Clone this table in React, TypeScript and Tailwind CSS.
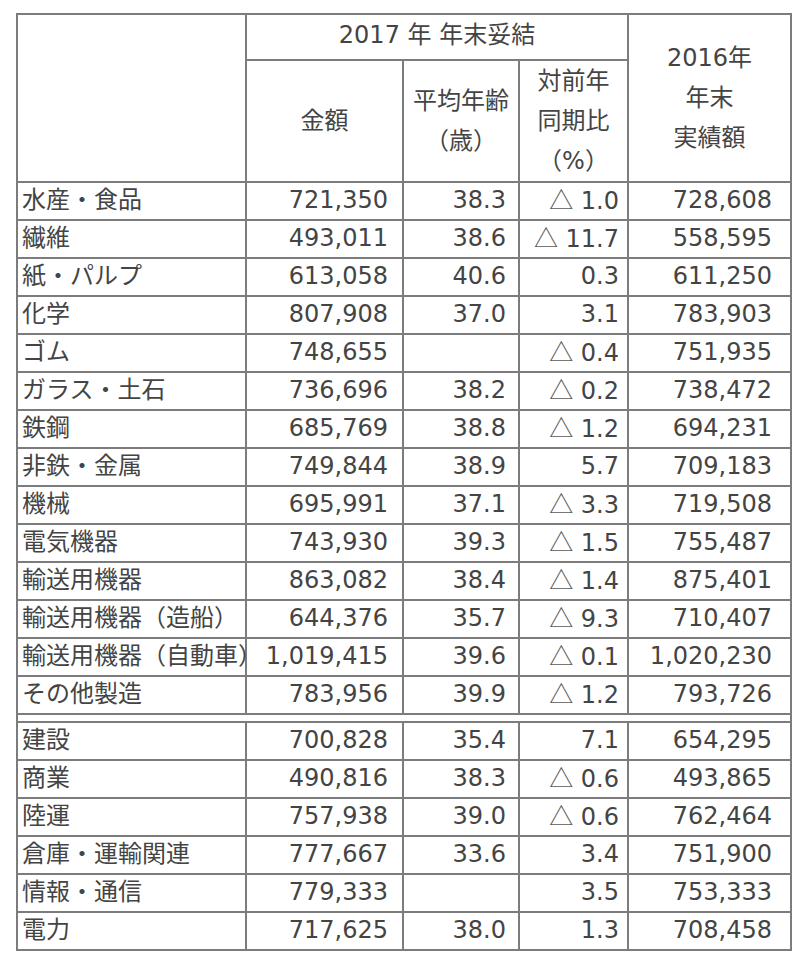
import React from "react";

type Row = [string, string, string, string, string];

const top: Row[] = [
  ["水産・食品", "721,350", "38.3", "△ 1.0", "728,608"],
  ["繊維", "493,011", "38.6", "△ 11.7", "558,595"],
  ["紙・パルプ", "613,058", "40.6", "0.3", "611,250"],
  ["化学", "807,908", "37.0", "3.1", "783,903"],
  ["ゴム", "748,655", "", "△ 0.4", "751,935"],
  ["ガラス・土石", "736,696", "38.2", "△ 0.2", "738,472"],
  ["鉄鋼", "685,769", "38.8", "△ 1.2", "694,231"],
  ["非鉄・金属", "749,844", "38.9", "5.7", "709,183"],
  ["機械", "695,991", "37.1", "△ 3.3", "719,508"],
  ["電気機器", "743,930", "39.3", "△ 1.5", "755,487"],
  ["輸送用機器", "863,082", "38.4", "△ 1.4", "875,401"],
  ["輸送用機器（造船）", "644,376", "35.7", "△ 9.3", "710,407"],
  ["輸送用機器（自動車）", "1,019,415", "39.6", "△ 0.1", "1,020,230"],
  ["その他製造", "783,956", "39.9", "△ 1.2", "793,726"],
];

const bottom: Row[] = [
  ["建設", "700,828", "35.4", "7.1", "654,295"],
  ["商業", "490,816", "38.3", "△ 0.6", "493,865"],
  ["陸運", "757,938", "39.0", "△ 0.6", "762,464"],
  ["倉庫・運輸関連", "777,667", "33.6", "3.4", "751,900"],
  ["情報・通信", "779,333", "", "3.5", "753,333"],
  ["電力", "717,625", "38.0", "1.3", "708,458"],
];

const cell = "border-2 border-[#7c7c7c] p-0 align-middle";
const dcell = `${cell} leading-[30px] pb-[3px] whitespace-nowrap`;

function Change({ v }: { v: string }) {
  if (v.startsWith("△")) {
    return (
      <>
        <span className="font-['Noto_Sans_CJK_JP'] text-[#5a5a5a]">△</span>
        {v.slice(1)}
      </>
    );
  }
  return <>{v}</>;
}

function DataRow({ r }: { r: Row }) {
  return (
    <tr className="h-[38px]">
      <td className={`${dcell} pl-[4px] text-left`}>{r[0]}</td>
      <td className={`${dcell} pr-[14px] text-right`}>{r[1]}</td>
      <td className={`${dcell} pr-[12px] text-right`}>{r[2]}</td>
      <td className={`${dcell} pr-[8px] text-right`}>
        <Change v={r[3]} />
      </td>
      <td className={`${dcell} pr-[18px] text-right`}>{r[4]}</td>
    </tr>
  );
}

export default function App() {
  return (
    <div className="w-[800px] h-[960px] bg-white pl-[16px] pt-[13px] text-[#444444] font-['DejaVu_Sans','Noto_Sans_CJK_JP',sans-serif] text-[24px] leading-[40px]">
      <table className="table-fixed border-collapse w-[774px]">
        <colgroup>
          <col className="w-[229px]" />
          <col className="w-[157px]" />
          <col className="w-[116px]" />
          <col className="w-[109px]" />
          <col className="w-[163px]" />
        </colgroup>
        <thead>
          <tr className="h-[46px]">
            <th rowSpan={2} className={cell}></th>
            <th colSpan={3} className={`${cell} font-normal text-center pb-[4px]`}>
              2017 年 年末妥結
            </th>
            <th rowSpan={2} className={`${cell} font-normal text-center`}>
              <div className="flex flex-col items-center">
                <span>2016年</span>
                <span>年末</span>
                <span>実績額</span>
              </div>
            </th>
          </tr>
          <tr className="h-[120px]">
            <th className={`${cell} font-normal text-center`}>金額</th>
            <th className={`${cell} font-normal text-center`}>
              <div className="flex flex-col items-center">
                <span>平均年齢</span>
                <span>（歳）</span>
              </div>
            </th>
            <th className={`${cell} font-normal text-center`}>
              <div className="flex flex-col items-center">
                <span>対前年</span>
                <span>同期比</span>
                <span>（%）</span>
              </div>
            </th>
          </tr>
        </thead>
        <tbody>
          {top.map((r) => (
            <DataRow key={r[0]} r={r} />
          ))}
          <tr className="h-[8px]">
            <td colSpan={5} className="p-0 border-l-2 border-r-2 border-[#7c7c7c]"></td>
          </tr>
          {bottom.map((r) => (
            <DataRow key={r[0]} r={r} />
          ))}
        </tbody>
      </table>
    </div>
  );
}
